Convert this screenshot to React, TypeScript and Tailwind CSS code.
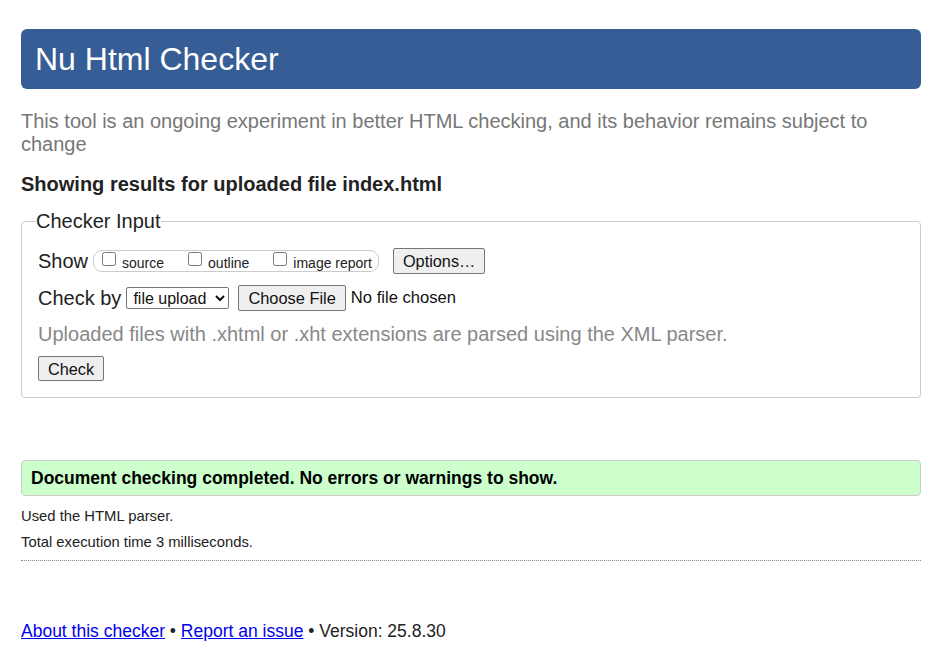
import React from 'react';

const font = "font-['Liberation_Sans',Arial,sans-serif]";

const ShowOption = ({ label, last }: { label: string; last?: boolean }) => (
  <label className={`flex items-center ${last ? '' : 'mr-[24px]'}`}>
    <input type="checkbox" className="m-0 w-[14px] h-[14px] mr-[6px] -mt-[4px]" />
    <span className="text-[14px] text-[#222] leading-[16px] mt-[3px]">{label}</span>
  </label>
);

export default function App() {
  return (
    <div className={`${font} bg-white min-h-[649px] pt-[29px] pl-[21px] pr-[19px] text-[#222]`}>
      {/* Header */}
      <header className="h-[60px] rounded-[6px] bg-[#365d95] flex items-center pl-[14px]">
        <h1 className="text-[32px] text-white leading-none font-normal">Nu Html Checker</h1>
      </header>

      <p className="mt-[21px] text-[20px] leading-[23px] text-[#777]">
        This tool is an ongoing experiment in better HTML checking, and its behavior remains subject to change
      </p>

      <p className="mt-[17px] text-[20px] leading-[22px] font-bold text-[#222]">
        Showing results for uploaded file index.html
      </p>

      {/* Checker input */}
      <fieldset className="mt-[15px] border border-[#ccc] rounded-[4px] pl-[16px] pr-[16px] pb-[15px]">
        <legend className="text-[20px] leading-[22px] -ml-[2px] px-0 text-[#222]">Checker Input</legend>

        <div className="mt-[16px] flex items-center h-[26px]">
          <span className="text-[20px] leading-[22px] mr-[5px]">Show</span>
          <div className="flex items-center h-[22px] border border-[#ccc] rounded-[9px] pl-[8px] pr-[6px]">
            <ShowOption label="source" />
            <ShowOption label="outline" />
            <ShowOption label="image report" last />
          </div>
          <button className="ml-[14px] h-[26px] px-[9px] bg-[#efefef] border border-[#767676] rounded-[2px] text-[16.3px] leading-[20px] text-[#111]">
            Options…
          </button>
        </div>

        <div className="mt-[11px] flex items-center h-[26px]">
          <span className="text-[20px] leading-[22px] mr-[5px]">Check by</span>
          <select className="h-[22px] border border-[#767676] rounded-[2px] text-[16px] bg-white text-[#111] pl-[2px] w-[103px]">
            <option>file upload</option>
          </select>
          <button className="ml-[9px] h-[26px] px-[9px] bg-[#efefef] border border-[#767676] rounded-[2px] text-[16.4px] leading-[20px] text-[#111]">
            Choose File
          </button>
          <span className="ml-[5px] text-[16.6px] text-[#111]">No file chosen</span>
        </div>

        <p className="mt-[11px] text-[20px] leading-[24px] text-[#888]">
          Uploaded files with .xhtml or .xht extensions are parsed using the XML parser.
        </p>

        <button className="mt-[10px] h-[25px] px-[9px] bg-[#efefef] border border-[#767676] rounded-[2px] text-[16.3px] leading-[20px] text-[#111]">
          Check
        </button>
      </fieldset>

      {/* Result */}
      <div className="mt-[62px] h-[36px] flex items-center bg-[#ccffcc] border border-[#ccc] rounded-[4px] pl-[9px]">
        <p className="text-[17.5px] font-bold text-black mt-[1px]">
          Document checking completed. No errors or warnings to show.
        </p>
      </div>

      <p className="mt-[11px] text-[14.8px] leading-[18px] text-[#222]">Used the HTML parser.</p>
      <p className="mt-[8px] text-[14.8px] leading-[18px] text-[#222]">Total execution time 3 milliseconds.</p>
      <div className="mt-[9px] border-b border-dotted border-[#888]" />

      {/* Footer */}
      <p className="mt-[59px] text-[17.5px] leading-[22px] text-[#222]">
        <a href="#" className="text-[#0000ee] underline">About this checker</a>
        {' • '}
        <a href="#" className="text-[#0000ee] underline">Report an issue</a>
        {' • Version: 25.8.30'}
      </p>
    </div>
  );
}
